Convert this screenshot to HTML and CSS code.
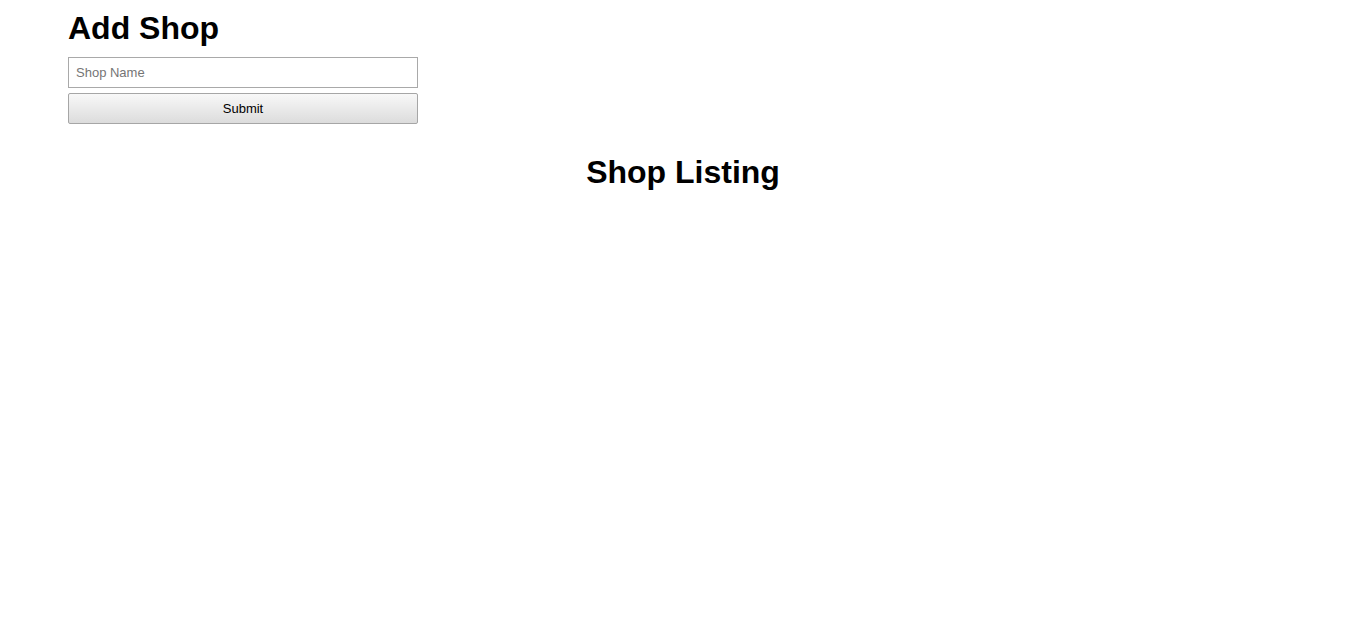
FILE: index.html
```html
<!DOCTYPE html>
<html>
<head>
<meta charset="utf-8">
<title>Shops</title>
<link rel="stylesheet" href="styles.css">
</head>
<body>
<div class="container">
  <h1 class="title">Add Shop</h1>
  <form class="shop-form">
    <input class="field" type="text" placeholder="Shop Name">
    <button class="submit" type="button">Submit</button>
  </form>
  <h1 class="listing-title">Shop Listing</h1>
</div>
</body>
</html>
```
FILE: styles.css
```css
html, body {
  margin: 0;
  padding: 0;
  background: #fff;
}
body {
  font-family: "Liberation Sans", Arial, sans-serif;
  color: #000;
}
.container {
  margin: 0 68px;
  padding-top: 10px;
}
.title {
  margin: 0;
  font-size: 32px;
  line-height: 37px;
  font-weight: bold;
}
.shop-form {
  display: flex;
  flex-direction: column;
  gap: 5px;
  width: 350px;
  margin-top: 10px;
}
.field {
  box-sizing: border-box;
  height: 31px;
  width: 100%;
  margin: 0;
  border: 1px solid #a9a9a9;
  border-radius: 0;
  padding: 0 7px;
  font-family: "Liberation Sans", Arial, sans-serif;
  font-size: 13px;
  color: #000;
  outline: none;
}
.field::placeholder {
  color: #757575;
}
.submit {
  box-sizing: border-box;
  height: 31px;
  width: 100%;
  margin: 0;
  border: 1px solid #a6a6a6;
  border-radius: 2px;
  background: linear-gradient(#f8f8f8, #dcdcdc);
  font-family: "Liberation Sans", Arial, sans-serif;
  font-size: 13px;
  color: #000;
}
.listing-title {
  margin: 30px 0 0;
  text-align: center;
  font-size: 32px;
  line-height: 37px;
  font-weight: bold;
}
```
